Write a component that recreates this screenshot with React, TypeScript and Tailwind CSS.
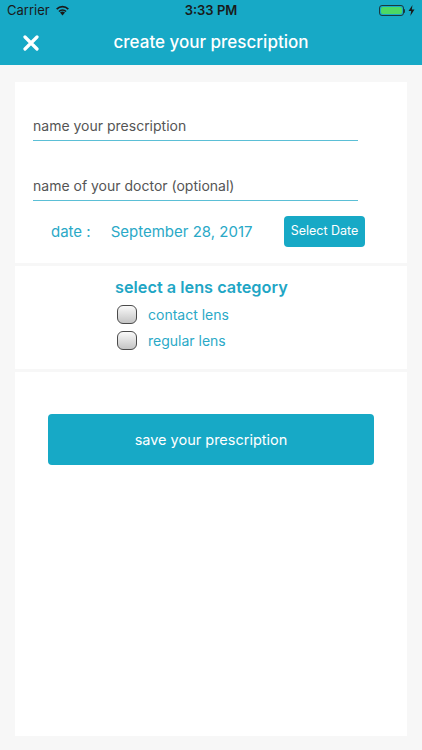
const font = { fontFamily: 'Inter, "Liberation Sans", sans-serif' };

const Wifi = () => (
  <svg width="15" height="11" viewBox="0 0 15 11" className="ml-[5px]">
    <path d="M7.5 10.5 L5 7.6 A3.6 3.6 0 0 1 10 7.6 Z" fill="#1a1a1a" />
    <path d="M3.4 5.9 A5.9 5.9 0 0 1 11.6 5.9 L10.5 7.1 A4.3 4.3 0 0 0 4.5 7.1 Z" fill="#1a1a1a" />
    <path d="M1.1 3.4 A9.2 9.2 0 0 1 13.9 3.4 L12.7 4.7 A7.5 7.5 0 0 0 2.3 4.7 Z" fill="#1a1a1a" />
  </svg>
);

const Battery = () => (
  <div className="flex items-center">
    <div className="w-[25px] h-[11px] rounded-[3px] border border-[#1a3a40] p-[1px]">
      <div className="w-full h-full rounded-[2px] bg-[#4cd964]" />
    </div>
    <div className="w-[1.5px] h-[4px] bg-[#1a3a40] rounded-r-sm" />
    <svg width="7" height="11" viewBox="0 0 7 11" className="ml-[3px]">
      <path d="M4.5 0 L0.5 6 L3.2 6 L2.3 11 L6.5 4.6 L3.8 4.6 Z" fill="#1a1a1a" />
    </svg>
  </div>
);

const Checkbox = () => (
  <div className="w-[20px] h-[19px] rounded-[6px] border-[1.5px] border-[#4a4a4a] bg-gradient-to-b from-[#fafafa] to-[#c4c4c4]" />
);

export default function App() {
  return (
    <div className="w-[422px] h-[750px] bg-[#f7f7f7] overflow-hidden flex flex-col" style={font}>
      {/* Header */}
      <div className="bg-[#17a9c6] h-[65px] flex flex-col">
        <div className="h-[21px] flex items-center justify-between px-[7px] relative">
          <div className="flex items-center text-[13px] text-[#1a1a1a]">
            Carrier
            <Wifi />
          </div>
          <div className="absolute left-0 right-0 text-center text-[13px] font-semibold text-[#1a1a1a]">
            3:33 PM
          </div>
          <Battery />
        </div>
        <div className="flex-1 flex items-center relative">
          <svg width="16" height="16" viewBox="0 0 16 16" className="ml-[23px]">
            <path d="M2 2 L14 14 M14 2 L2 14" stroke="white" strokeWidth="3.2" strokeLinecap="round" />
          </svg>
          <div className="absolute left-0 right-0 text-center text-white text-[17px] font-medium">
            create your prescription
          </div>
        </div>
      </div>

      {/* Content */}
      <div className="flex-1 flex flex-col gap-[3px] px-[15px] pt-[17px] pb-[14px]">
        <div className="bg-white h-[181px] pt-[25px] px-[18px] flex flex-col">
          <div className="w-[325px] h-[34px] flex items-end pb-[4px] border-b border-[#5bbfd6] text-[14px] leading-[20px] text-[#555]">
            name your prescription
          </div>
          <div className="w-[325px] h-[34px] mt-[26px] flex items-end pb-[4px] border-b border-[#5bbfd6] text-[14px] leading-[20px] text-[#555]">
            name of your doctor (optional)
          </div>
          <div className="flex items-center mt-[15px] h-[31px]">
            <span className="ml-[18px] mt-[2px] text-[15px] text-[#2aa9c7]">date :</span>
            <span className="ml-[20px] mt-[2px] text-[15px] text-[#2aa9c7]">September 28, 2017</span>
            <button className="ml-auto mr-[24px] w-[81px] h-[31px] rounded-[4px] bg-[#17a9c6] text-white text-[12.5px]">
              Select Date
            </button>
          </div>
        </div>

        <div className="bg-white h-[103px] pl-[100px] pt-[11px] flex flex-col">
          <div className="text-[16.3px] leading-[20px] font-semibold text-[#1fa6c5]">select a lens category</div>
          <div className="flex items-center gap-[11px] mt-[8px] ml-[2px] h-[19px]">
            <Checkbox />
            <span className="text-[14px] text-[#2aa9c7]">contact lens</span>
          </div>
          <div className="flex items-center gap-[11px] mt-[7px] ml-[2px] h-[19px]">
            <Checkbox />
            <span className="text-[14px] text-[#2aa9c7]">regular lens</span>
          </div>
        </div>

        <div className="bg-white flex-1 pt-[42px] px-[33px]">
          <button className="w-full h-[51px] rounded-[4px] bg-[#17a9c6] text-white text-[14.5px]">
            save your prescription
          </button>
        </div>
      </div>
    </div>
  );
}
